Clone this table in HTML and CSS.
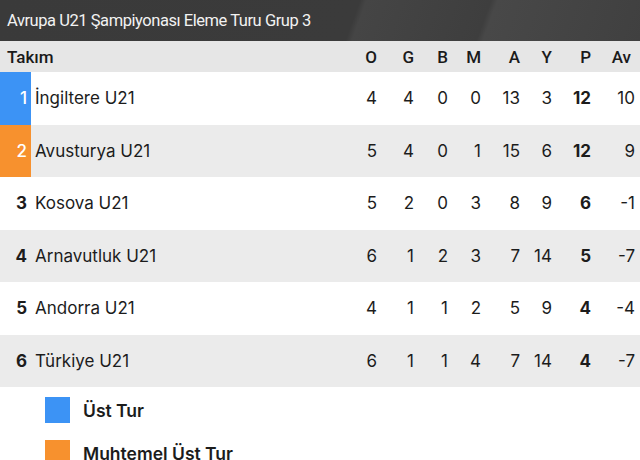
FILE: index.html
```html
<!DOCTYPE html>
<html lang="tr">
<head>
<meta charset="utf-8">
<link rel="stylesheet" href="styles.css">
</head>
<body>
<div class="title">Avrupa U21 Şampiyonası Eleme Turu Grup 3</div>
<div class="table">
  <div class="row head">
    <div class="team">Takım</div>
    <div class="c">O</div><div class="c">G</div><div class="c">B</div><div class="c">M</div>
    <div class="c">A</div><div class="c">Y</div><div class="c">P</div><div class="c last">Av</div>
  </div>
  <div class="row">
    <div class="team"><span class="rank blue">1</span><span class="name">İngiltere U21</span></div>
    <div class="c">4</div><div class="c">4</div><div class="c">0</div><div class="c">0</div>
    <div class="c">13</div><div class="c">3</div><div class="c b">12</div><div class="c">10</div>
  </div>
  <div class="row alt">
    <div class="team"><span class="rank orange">2</span><span class="name">Avusturya U21</span></div>
    <div class="c">5</div><div class="c">4</div><div class="c">0</div><div class="c">1</div>
    <div class="c">15</div><div class="c">6</div><div class="c b">12</div><div class="c">9</div>
  </div>
  <div class="row">
    <div class="team"><span class="rank">3</span><span class="name">Kosova U21</span></div>
    <div class="c">5</div><div class="c">2</div><div class="c">0</div><div class="c">3</div>
    <div class="c">8</div><div class="c">9</div><div class="c b">6</div><div class="c">-1</div>
  </div>
  <div class="row alt">
    <div class="team"><span class="rank">4</span><span class="name">Arnavutluk U21</span></div>
    <div class="c">6</div><div class="c">1</div><div class="c">2</div><div class="c">3</div>
    <div class="c">7</div><div class="c">14</div><div class="c b">5</div><div class="c">-7</div>
  </div>
  <div class="row">
    <div class="team"><span class="rank">5</span><span class="name">Andorra U21</span></div>
    <div class="c">4</div><div class="c">1</div><div class="c">1</div><div class="c">2</div>
    <div class="c">5</div><div class="c">9</div><div class="c b">4</div><div class="c">-4</div>
  </div>
  <div class="row alt">
    <div class="team"><span class="rank">6</span><span class="name">Türkiye U21</span></div>
    <div class="c">6</div><div class="c">1</div><div class="c">1</div><div class="c">4</div>
    <div class="c">7</div><div class="c">14</div><div class="c b">4</div><div class="c">-7</div>
  </div>
</div>
<ul class="legend">
  <li><span class="sq blue"></span>Üst Tur</li>
  <li><span class="sq orange"></span>Muhtemel Üst Tur</li>
</ul>
</body>
</html>
```
FILE: styles.css
```css
html, body {
  margin: 0;
  padding: 0;
  background: #ffffff;
  width: 640px;
  height: 460px;
  overflow: hidden;
}
body {
  font-family: "Inter", "Liberation Sans", sans-serif;
  color: #1c1c1c;
}
.title {
  height: 41px;
  box-sizing: border-box;
  padding-left: 7px;
  display: flex;
  align-items: center;
  font-family: "Roboto", sans-serif;
  font-size: 16.5px;
  letter-spacing: -0.45px;
  color: #f2f2f2;
  background: linear-gradient(110deg, #3a3a3a 0%, #3b3b3b 55%, #454545 56%, #3e3e3e 75%, #484848 76%, #404040 100%);
}
.row {
  display: grid;
  grid-template-columns: 1fr 37px 37px 34px 33px 39px 32px 39px 44px;
  padding-right: 5px;
  height: 52.5px;
  align-items: center;
  font-size: 17px;
  background: #ffffff;
}
.row.alt {
  background: #ebebeb;
}
.row.head {
  height: 31px;
  background: #e6e6e6;
  font-family: "Roboto", sans-serif;
  font-weight: 500;
  font-size: 17px;
  color: #1a1a1a;
}
.head .team {
  padding-left: 7px;
}
.head .last {
  padding-right: 4px;
}
.team {
  display: flex;
  align-items: center;
  height: 100%;
}
.rank {
  width: 31px;
  height: 100%;
  box-sizing: border-box;
  padding-right: 4px;
  display: flex;
  align-items: center;
  justify-content: flex-end;
  font-weight: 700;
}
.rank.blue {
  background: #3c93f5;
  color: #ffffff;
  font-weight: 500;
}
.rank.orange {
  background: #f7912e;
  color: #ffffff;
  font-weight: 500;
}
.name {
  padding-left: 4px;
}
.c {
  text-align: right;
}
.c.b {
  font-weight: 700;
}
.legend {
  list-style: none;
  margin: 0;
  padding: 10px 0 0 45px;
  display: flex;
  flex-direction: column;
  gap: 17px;
}
.legend li {
  display: flex;
  align-items: center;
  gap: 13px;
  font-size: 17.5px;
  font-weight: 600;
  height: 26px;
}
.sq {
  width: 25px;
  height: 26px;
}
.sq.blue { background: #3c93f5; }
.sq.orange { background: #f7912e; }
```
